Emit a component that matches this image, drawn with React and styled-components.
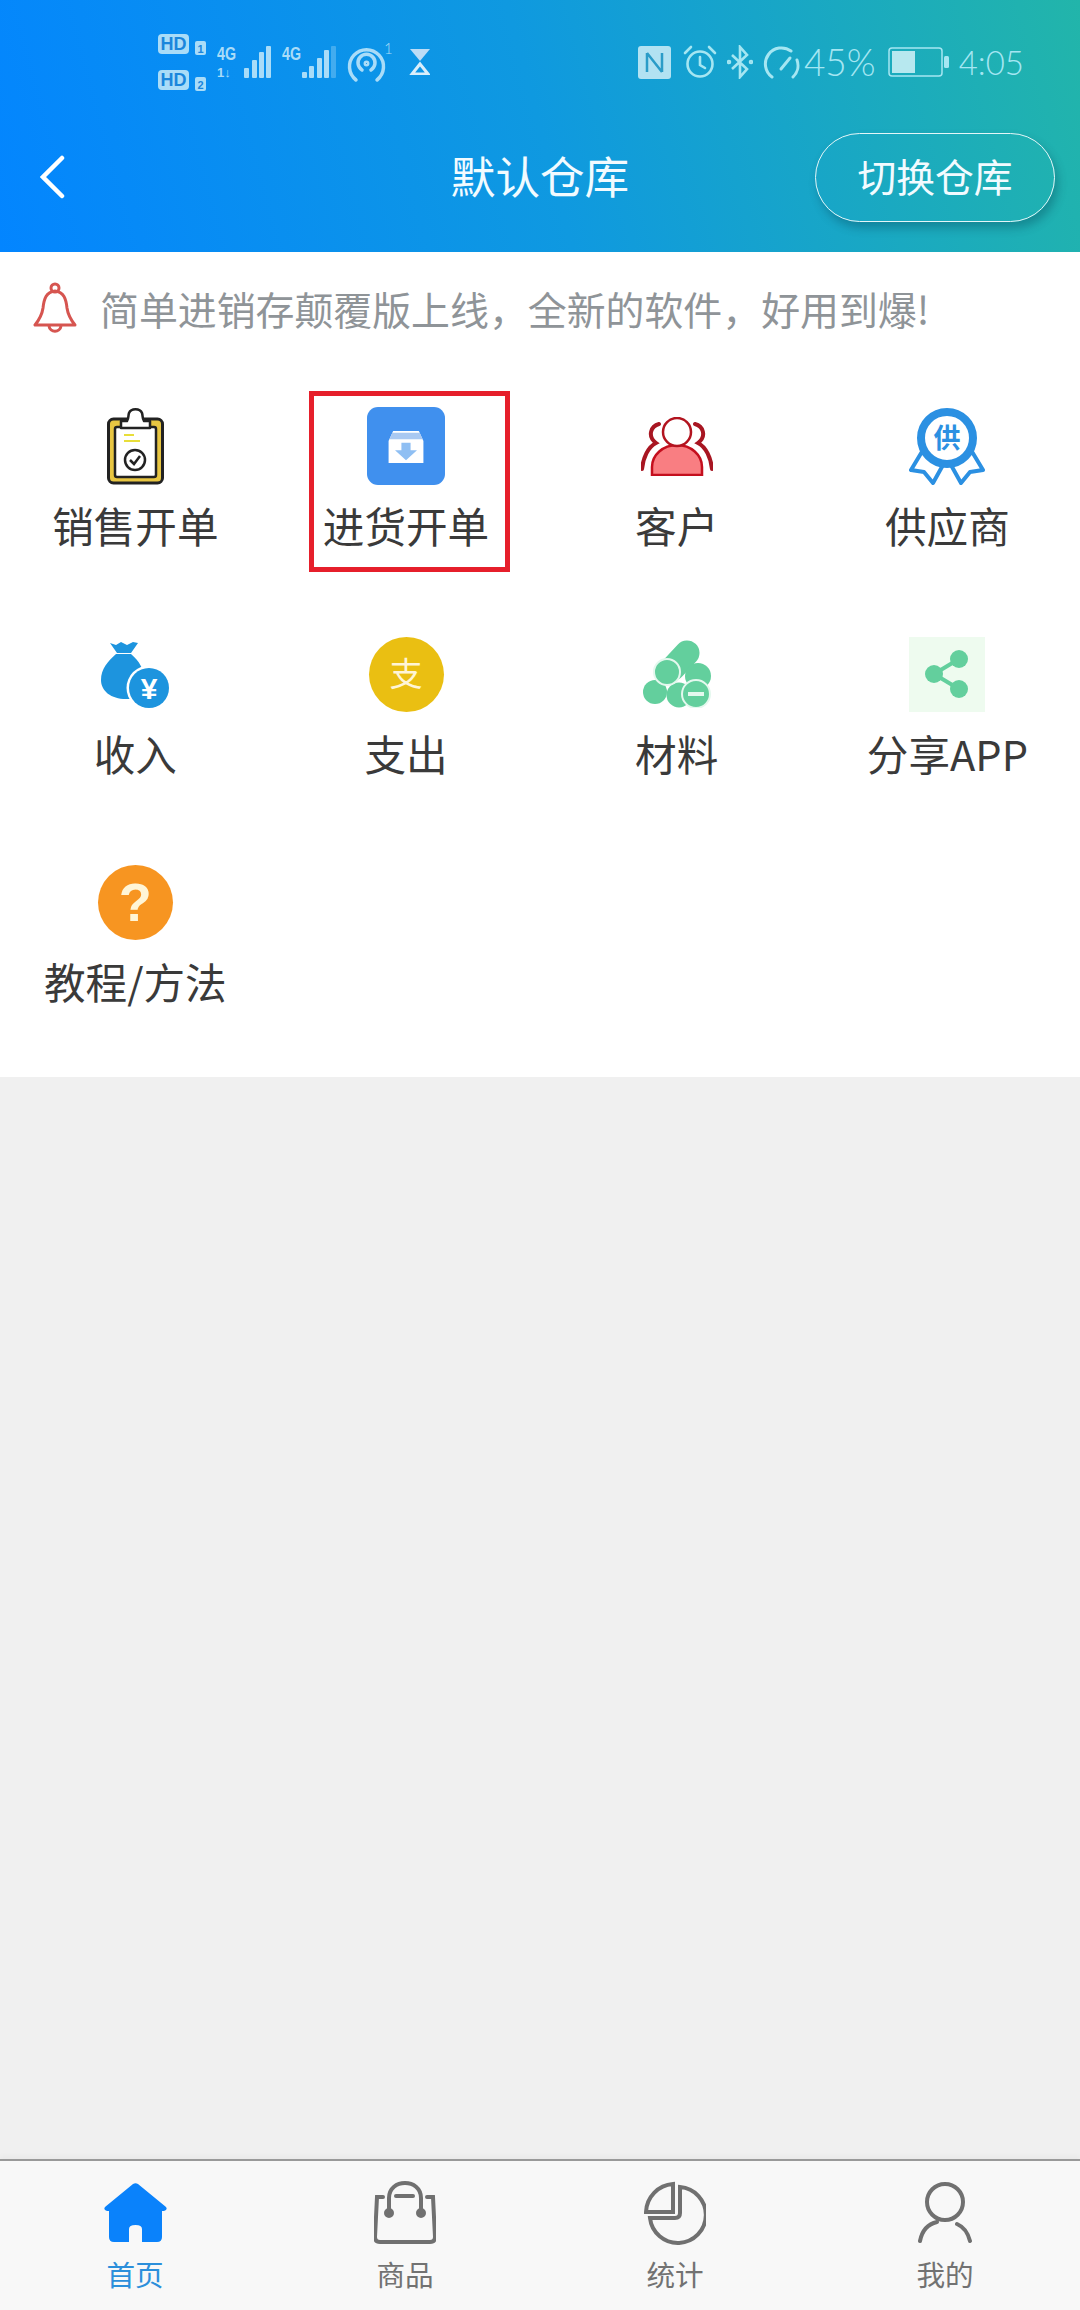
import React from "react";
import styled, { createGlobalStyle } from "styled-components";

const Global = createGlobalStyle`
  html, body { margin: 0; padding: 0; background: #f0f0f0; }
  * { box-sizing: border-box; }
  body { font-family: "Noto Sans CJK SC", "Noto Sans", sans-serif; }
`;

const Page = styled.div`
  width: 1080px;
  height: 2310px;
  display: flex;
  flex-direction: column;
  background: #f0f0f0;
  overflow: hidden;
`;
const Header = styled.header`
  height: 252px;
  flex: none;
  background: linear-gradient(75deg, #0385ff 0%, #0f99e0 50%, #22b5aa 100%);
`;
const StatusBar = styled.div`
  height: 124px;
  display: flex;
  align-items: center;
  justify-content: space-between;
  padding: 0 56px 0 158px;
`;
const StatusGroup = styled.div`
  display: flex;
  align-items: center;
  gap: ${p => p.$gap}px;
`;
const StatusText = styled.span`
  font-family: "Lato", "Noto Sans", sans-serif;
  font-weight: 300;
  font-size: ${p => p.$size}px;
  line-height: 40px;
  color: #a5e6f2;
  margin-left: ${p => p.$left || 0}px;
  margin-right: ${p => p.$right || 0}px;
`;
const Nav = styled.div`
  height: 106px;
  display: grid;
  grid-template-columns: 1fr auto 1fr;
  align-items: center;
  padding: 0 25px 0 40px;
`;
const Back = styled.svg`
  width: 25px;
  height: 44px;
`;
const Title = styled.h1`
  margin: 0 0 4px -15px;
  font-size: 44.6px;
  font-weight: 400;
  line-height: 60px;
  color: #f2fbff;
`;
const SwitchButton = styled.button`
  justify-self: end;
  width: 240px;
  height: 89px;
  border: 1.5px solid #e4f6f8;
  border-radius: 45px;
  background: transparent;
  box-shadow: 3px 6px 10px rgba(0, 50, 70, 0.3);
  color: #f2fbff;
  font: 400 38.8px/1 "Noto Sans CJK SC", sans-serif;
  padding: 0 0 4px;
`;
const Panel = styled.section`
  background: #fff;
  flex: none;
  height: 825px;
`;
const Notice = styled.div`
  height: 118px;
  padding: 0 0 6px 33px;
  display: flex;
  align-items: center;
  gap: 23px;
  font-size: 38.9px;
  color: #8f9498;
  white-space: nowrap;
`;
const Grid = styled.div`
  display: grid;
  grid-template-columns: repeat(4, 270.7px);
  grid-auto-rows: 228px;
  padding-top: 22px;
`;
const Cell = styled.div`
  position: relative;
  display: flex;
  flex-direction: column;
  align-items: center;
  padding-top: 14px;
`;
const IconSlot = styled.div`
  height: 80px;
  display: flex;
  align-items: center;
  justify-content: center;
`;
const Label = styled.div`
  margin-top: 13px;
  font-size: 41.6px;
  line-height: 52px;
  color: #3a3a3a;
  white-space: nowrap;
`;
const Highlight = styled.div`
  position: absolute;
  left: 38px;
  top: -1px;
  width: 201px;
  height: 181px;
  border: 5px solid #e61f2b;
  pointer-events: none;
`;
const BlueSquare = styled.div`
  width: 78px;
  height: 78px;
  border-radius: 11px;
  background: #4090ee;
  display: flex;
  align-items: center;
  justify-content: center;
`;
const Round = styled.div`
  width: 75px;
  height: 75px;
  border-radius: 50%;
  background: ${p => p.$bg};
  color: #fff5d6;
  display: flex;
  align-items: center;
  justify-content: center;
  font-family: "Liberation Sans", "Noto Sans CJK SC", sans-serif;
  font-size: ${p => p.$size}px;
  font-weight: ${p => p.$weight};
  line-height: 1;
`;
const ShareBox = styled.div`
  width: 76px;
  height: 75px;
  background: #eefbef;
  display: flex;
  align-items: center;
  justify-content: center;
`;
const Spacer = styled.div`
  flex: 1;
`;
const TabBar = styled.nav`
  flex: none;
  height: 151px;
  background: #f8f8f8;
  border-top: 2px solid #999;
  box-shadow: 0 -3px 5px rgba(0, 0, 0, 0.03);
  display: grid;
  grid-template-columns: repeat(4, 270px);
`;
const Tab = styled.div`
  display: flex;
  flex-direction: column;
  align-items: center;
  padding-top: 20px;
  color: ${p => (p.$active ? "#2c8fdb" : "#727272")};
`;
const TabIcon = styled.div`
  height: 64px;
  display: flex;
  align-items: center;
`;
const TabLabel = styled.div`
  margin-top: 11px;
  font-size: 28.6px;
  line-height: 36px;
`;

const L = "#a9dcf8";

const HdStack = () => (
  <svg width="48" height="58" viewBox="0 0 48 58">
    {[0, 36].map((y, i) => (
      <g key={y}>
        <rect x="0" y={y + 1} width="31" height="20" rx="4" fill={L} />
        <text x="15.5" y={y + 17} textAnchor="middle" fontFamily="Liberation Sans" fontWeight="700" fontSize="18" fill="#1a86dc">HD</text>
        <rect x="37" y={y + 8} width="11" height="14" rx="2" fill={L} />
        <text x="42.5" y={y + 20} textAnchor="middle" fontFamily="Liberation Sans" fontWeight="700" fontSize="11" fill="#1a86dc">{i + 1}</text>
      </g>
    ))}
  </svg>
);
const Sig = ({ bars, width, data }) => (
  <svg width={width} height="36" viewBox={`0 0 ${width} 36`}>
    <text x="0" y="16" fontFamily="Liberation Sans Narrow, Liberation Sans" fontWeight="700" fontSize="19" textLength="19" lengthAdjust="spacingAndGlyphs" fill={L}>4G</text>
    {data && <text x="0" y="33" fontFamily="Liberation Sans" fontWeight="700" fontSize="13" fill={L}>1↓</text>}
    {bars.map(([x, h, o]) => (
      <rect key={x} x={x} y={34 - h} width="5" height={h} rx="1" fill={L} opacity={o || 1} />
    ))}
  </svg>
);
const Hotspot = () => (
  <svg width="46" height="44" viewBox="0 0 46 44" fill="none" stroke={L} strokeWidth="3.500" strokeLinecap="round">
    <path d="M9 40a17 17 0 1 1 21 0" />
    <path d="M15 30a8.500 8.500 0 1 1 9 0" />
    <circle cx="19.500" cy="23.500" r="1.200" />
    <text x="37" y="14" fontFamily="Lato" fontWeight="300" fontSize="15" fill={L} stroke="none">1</text>
  </svg>
);
const Hourglass = () => (
  <svg width="26" height="26" viewBox="-6 0 26 26">
    <path d="M0 0H20L10 12Z" fill="#bcdcf6" />
    <path d="M10 15L18 25H2Z" fill="none" stroke="#d9eefb" strokeWidth="3" />
  </svg>
);
const Nfc = () => (
  <svg width="35" height="33" viewBox="0 0 35 33">
    <rect width="33" height="33" rx="3" fill="#b2e2f2" />
    <path d="M9 7V26M9 7L24 26M24 7V26" stroke="#2a9cc8" strokeWidth="2.500" fill="none" />
  </svg>
);
const Alarm = () => (
  <svg width="34" height="34" viewBox="0 0 34 34" fill="none" stroke="#a5e6f2" strokeWidth="2.600" strokeLinecap="round">
    <circle cx="17" cy="19" r="12.500" />
    <path d="M17 12V20L22 23M2 8L8 2M32 8L26 2" />
  </svg>
);
const Bluetooth = () => (
  <svg width="26" height="34" viewBox="0 0 26 34" fill="none" stroke="#a5e6f2" strokeWidth="2.600">
    <path d="M5 10L20 24L13 32V2L20 10L5 24" />
    <circle cx="2" cy="17" r="1" />
    <circle cx="24" cy="17" r="1" />
  </svg>
);
const Gauge = () => (
  <svg width="38" height="34" viewBox="0 0 38 34" fill="none" stroke="#a5e6f2" strokeWidth="3" strokeLinecap="round">
    <path d="M9 32A16 16 0 0 1 28 6" />
    <path d="M34 15A16 16 0 0 1 30 32" />
    <path d="M18 24L27 13" />
  </svg>
);
const Battery = () => (
  <svg width="61" height="30" viewBox="0 0 61 30">
    <rect x="1" y="1" width="53" height="28" rx="3" fill="none" stroke="#a5e6f2" strokeWidth="1.500" />
    <rect x="4" y="4" width="23" height="22" fill="#b7e8ef" />
    <rect x="56" y="9" width="5" height="12" rx="1.500" fill="#a5e6f2" />
  </svg>
);

const Clipboard = () => (
  <svg width="57" height="77" viewBox="0 0 57 77">
    <rect x="1.500" y="11" width="54" height="64" rx="5" fill="#e8c642" stroke="#222" strokeWidth="3" />
    <rect x="8" y="19" width="41" height="50" rx="2" fill="#fff" stroke="#222" strokeWidth="2.500" />
    <path d="M14 20V13H20C22 10 21 8 22 5C24 0 33 0 35 5C36 8 35 10 37 13H43V20Z" fill="#fff" stroke="#222" strokeWidth="2.500" strokeLinejoin="round" />
    <path d="M17 27H27M17 33H33" stroke="#e8de3a" strokeWidth="2" />
    <circle cx="28" cy="52" r="10" fill="#fff" stroke="#222" strokeWidth="2.500" />
    <path d="M23 52L27 56L33 48" fill="none" stroke="#222" strokeWidth="2.500" />
  </svg>
);
const InBox = () => (
  <svg width="38" height="33" viewBox="0 0 40 36">
    <path d="M6 1H34L39 12V36H1V12Z" fill="#fff" />
    <path d="M5 3H35L38 10H2Z" fill="#a9c9f2" />
    <path d="M15 14H25V22H32L20 33L8 22H15Z" fill="#8fbff3" />
  </svg>
);
const People = () => (
  <svg width="72" height="59" viewBox="0 0 72 59" fill="none">
    <path d="M18 7C10 9 6 19 15 26C7 30 2 41 1 52M54 7C62 9 66 19 57 26C65 30 70 41 71 52" stroke="#a81622" strokeWidth="4" strokeLinecap="round" />
    <path d="M11 58V50C11 38 22 28 36 28C50 28 61 38 61 50V58Z" fill="#f97e82" stroke="#c40f1e" strokeWidth="2.500" />
    <circle cx="36" cy="15" r="14" fill="#fff" stroke="#b2141f" strokeWidth="2.500" />
  </svg>
);
const Medal = () => (
  <svg width="76" height="77" viewBox="0 0 76 77">
    <path d="M14 42L2 62L15 64L24 75L34 57L42 57L52 75L61 64L74 62L62 42Z" fill="#fff" stroke="#2b90e2" strokeWidth="4" strokeLinejoin="round" />
    <circle cx="38" cy="30" r="26" fill="#fff" stroke="#2b90e2" strokeWidth="8" />
    <text x="38" y="40" textAnchor="middle" fontFamily="Noto Sans CJK SC" fontWeight="700" fontSize="27" fill="#2b90e2">供</text>
  </svg>
);
const MoneyBag = () => (
  <svg width="68" height="67" viewBox="0 0 68 67">
    <path d="M9 2L15 4L20 1L26 4L32 1L37 2L30 12H16Z" fill="#1d94de" />
    <path d="M15 13H30C38 20 44 28 43 42V58H25C10 58 0 50 0 39C0 28 7 20 15 13Z" fill="#1d94de" />
    <circle cx="48" cy="47" r="22.500" fill="#fff" />
    <circle cx="48" cy="47" r="20" fill="#1d94de" />
    <text x="48" y="58" textAnchor="middle" fontFamily="Liberation Sans" fontWeight="700" fontSize="30" fill="#fff">¥</text>
  </svg>
);
const Pills = () => (
  <svg width="68" height="68" viewBox="0 0 68 68" fill="#63cf9d">
    <path d="M30 28L44 13" stroke="#63cf9d" strokeWidth="25" strokeLinecap="round" />
    <circle cx="55" cy="36" r="13" />
    <circle cx="12" cy="52" r="12" />
    <circle cx="36" cy="55" r="12.500" />
    <circle cx="24" cy="32" r="13" stroke="#e4f8ee" strokeWidth="2" />
    <circle cx="53" cy="54" r="14" stroke="#e4f8ee" strokeWidth="2" />
    <path d="M45 54H61" stroke="#e4f8ee" strokeWidth="4" />
  </svg>
);
const ShareIcon = () => (
  <svg width="44" height="48" viewBox="0 0 44 48" fill="#63cf9d">
    <path d="M9 24L34 9M9 24L34 39" stroke="#63cf9d" strokeWidth="4" />
    <circle cx="9" cy="24" r="9" />
    <circle cx="34" cy="9" r="9" />
    <circle cx="34" cy="39" r="9" />
  </svg>
);

const Bell = () => (
  <svg width="44" height="52" viewBox="0 0 44 52" fill="none" stroke="#d65550" strokeWidth="3" strokeLinejoin="round">
    <circle cx="22" cy="6" r="4" />
    <path d="M22 9C13 10 11 17 10 26C9 33 6 38 2 43H42C38 38 35 33 34 26C33 17 31 10 22 9Z" />
    <path d="M16 44C17 51 27 51 28 44" />
  </svg>
);
const Home = () => (
  <svg width="63" height="60" viewBox="0 0 63 60" fill="#0a82fb">
    <path d="M29 1Q31.500 -0.500 34 1L62 24Q64 27 60 28H58V54Q58 59 53 59H38V46Q38 42 31.500 42Q25 42 25 46V59H10Q5 59 5 54V28H3Q-1 27 1 24Z" />
  </svg>
);
const ShopBag = () => (
  <svg width="62" height="64" viewBox="0 0 62 64" fill="none" stroke="#707070" strokeWidth="4" strokeLinecap="round">
    <path d="M9 16H3L1 56Q1 61 6 61H56Q61 61 61 56L59 16H53" />
    <path d="M15 30V17C15 -3 47 -3 47 17V30" />
    <path d="M22 15H39" />
    <circle cx="15" cy="32" r="3" fill="#707070" />
    <circle cx="47" cy="32" r="3" fill="#707070" />
  </svg>
);
const Pie = () => (
  <svg width="62" height="64" viewBox="0 0 62 64" fill="none" stroke="#707070" strokeWidth="4">
    <path d="M29 3V31H2A29 29 0 0 1 29 3Z" />
    <path d="M36 6A28 28 0 1 1 6 37H31Q36 37 36 32Z" />
  </svg>
);
const User = () => (
  <svg width="54" height="64" viewBox="0 0 54 64" fill="none" stroke="#707070" strokeWidth="4" strokeLinecap="round">
    <circle cx="27" cy="21" r="18" />
    <path d="M2 60C4 50 10 43 19 41M39 43C46 46 50 52 52 60" />
  </svg>
);

const items = [
  { label: "销售开单", icon: <Clipboard /> },
  { label: "进货开单", icon: <BlueSquare><InBox /></BlueSquare>, marked: true },
  { label: "客户", icon: <People /> },
  { label: "供应商", icon: <Medal /> },
  { label: "收入", icon: <MoneyBag /> },
  { label: "支出", icon: <Round $bg="#eabf12" $size={33} $weight={400}>支</Round> },
  { label: "材料", icon: <Pills /> },
  { label: "分享APP", icon: <ShareBox><ShareIcon /></ShareBox> },
  { label: "教程/方法", icon: <Round $bg="#f79521" $size={54} $weight={700}>?</Round> },
];
const tabs = [
  { label: "首页", icon: <Home />, active: true },
  { label: "商品", icon: <ShopBag /> },
  { label: "统计", icon: <Pie /> },
  { label: "我的", icon: <User /> },
];

export default function App() {
  return (
    <Page>
      <Global />
      <Header>
        <StatusBar>
          <StatusGroup $gap={11}>
            <HdStack />
            <Sig width={54} data bars={[[27, 10], [35, 18], [42, 26], [49, 32]]} />
            <Sig width={54} bars={[[20, 6], [27, 12], [35, 20], [42, 28], [49, 32, 0.35]]} />
            <Hotspot />
            <Hourglass />
          </StatusGroup>
          <StatusGroup $gap={10}>
            <Nfc />
            <Alarm />
            <Bluetooth />
            <Gauge />
            <StatusText $size={37} $left={-7} $right={2}>45%</StatusText>
            <Battery />
            <StatusText $size={33}>4:05</StatusText>
          </StatusGroup>
        </StatusBar>
        <Nav>
          <Back viewBox="0 0 25 44" fill="none" stroke="#fff" strokeWidth="4.500" strokeLinecap="round">
            <path d="M22 3L3 22L22 41" />
          </Back>
          <Title>默认仓库</Title>
          <SwitchButton>切换仓库</SwitchButton>
        </Nav>
      </Header>
      <Panel>
        <Notice>
          <Bell />
          简单进销存颠覆版上线，全新的软件，好用到爆!
        </Notice>
        <Grid>
          {items.map(item => (
            <Cell key={item.label}>
              <IconSlot>{item.icon}</IconSlot>
              <Label>{item.label}</Label>
              {item.marked && <Highlight />}
            </Cell>
          ))}
        </Grid>
      </Panel>
      <Spacer />
      <TabBar>
        {tabs.map(tab => (
          <Tab key={tab.label} $active={tab.active}>
            <TabIcon>{tab.icon}</TabIcon>
            <TabLabel>{tab.label}</TabLabel>
          </Tab>
        ))}
      </TabBar>
    </Page>
  );
}
